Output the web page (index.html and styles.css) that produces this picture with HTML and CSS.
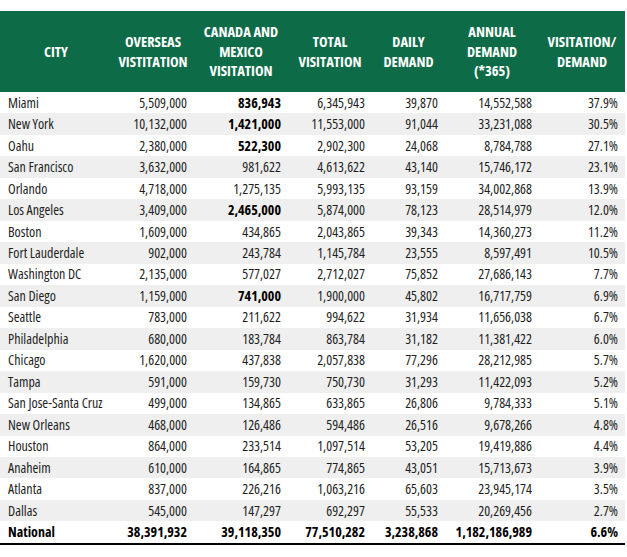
FILE: index.html
```html
<!DOCTYPE html>
<html>
<head>
<meta charset="utf-8">
<link rel="stylesheet" href="styles.css">
</head>
<body>
<table class="data">
  <colgroup>
    <col class="c-city"><col class="c-over"><col class="c-can"><col class="c-tot"><col class="c-daily"><col class="c-ann"><col class="c-vis">
  </colgroup>
  <thead>
    <tr>
      <th>CITY</th>
      <th>OVERSEAS<br>VISTITATION</th>
      <th>CANADA AND<br>MEXICO<br>VISITATION</th>
      <th>TOTAL<br>VISITATION</th>
      <th>DAILY<br>DEMAND</th>
      <th>ANNUAL<br>DEMAND<br>(*365)</th>
      <th>VISITATION/<br>DEMAND</th>
    </tr>
  </thead>
  <tbody>
    <tr><td>Miami</td><td>5,509,000</td><td class="b">836,943</td><td>6,345,943</td><td>39,870</td><td>14,552,588</td><td>37.9%</td></tr>
    <tr><td>New York</td><td>10,132,000</td><td class="b">1,421,000</td><td>11,553,000</td><td>91,044</td><td>33,231,088</td><td>30.5%</td></tr>
    <tr><td>Oahu</td><td>2,380,000</td><td class="b">522,300</td><td>2,902,300</td><td>24,068</td><td>8,784,788</td><td>27.1%</td></tr>
    <tr><td>San Francisco</td><td>3,632,000</td><td>981,622</td><td>4,613,622</td><td>43,140</td><td>15,746,172</td><td>23.1%</td></tr>
    <tr><td>Orlando</td><td>4,718,000</td><td>1,275,135</td><td>5,993,135</td><td>93,159</td><td>34,002,868</td><td>13.9%</td></tr>
    <tr><td>Los Angeles</td><td>3,409,000</td><td class="b">2,465,000</td><td>5,874,000</td><td>78,123</td><td>28,514,979</td><td>12.0%</td></tr>
    <tr><td>Boston</td><td>1,609,000</td><td>434,865</td><td>2,043,865</td><td>39,343</td><td>14,360,273</td><td>11.2%</td></tr>
    <tr><td>Fort Lauderdale</td><td>902,000</td><td>243,784</td><td>1,145,784</td><td>23,555</td><td>8,597,491</td><td>10.5%</td></tr>
    <tr><td>Washington DC</td><td>2,135,000</td><td>577,027</td><td>2,712,027</td><td>75,852</td><td>27,686,143</td><td>7.7%</td></tr>
    <tr><td>San Diego</td><td>1,159,000</td><td class="b">741,000</td><td>1,900,000</td><td>45,802</td><td>16,717,759</td><td>6.9%</td></tr>
    <tr><td>Seattle</td><td>783,000</td><td>211,622</td><td>994,622</td><td>31,934</td><td>11,656,038</td><td>6.7%</td></tr>
    <tr><td>Philadelphia</td><td>680,000</td><td>183,784</td><td>863,784</td><td>31,182</td><td>11,381,422</td><td>6.0%</td></tr>
    <tr><td>Chicago</td><td>1,620,000</td><td>437,838</td><td>2,057,838</td><td>77,296</td><td>28,212,985</td><td>5.7%</td></tr>
    <tr><td>Tampa</td><td>591,000</td><td>159,730</td><td>750,730</td><td>31,293</td><td>11,422,093</td><td>5.2%</td></tr>
    <tr><td>San Jose-Santa Cruz</td><td>499,000</td><td>134,865</td><td>633,865</td><td>26,806</td><td>9,784,333</td><td>5.1%</td></tr>
    <tr><td>New Orleans</td><td>468,000</td><td>126,486</td><td>594,486</td><td>26,516</td><td>9,678,266</td><td>4.8%</td></tr>
    <tr><td>Houston</td><td>864,000</td><td>233,514</td><td>1,097,514</td><td>53,205</td><td>19,419,886</td><td>4.4%</td></tr>
    <tr><td>Anaheim</td><td>610,000</td><td>164,865</td><td>774,865</td><td>43,051</td><td>15,713,673</td><td>3.9%</td></tr>
    <tr><td>Atlanta</td><td>837,000</td><td>226,216</td><td>1,063,216</td><td>65,603</td><td>23,945,174</td><td>3.5%</td></tr>
    <tr><td>Dallas</td><td>545,000</td><td>147,297</td><td>692,297</td><td>55,533</td><td>20,269,456</td><td>2.7%</td></tr>
    <tr class="total"><td>National</td><td>38,391,932</td><td class="b">39,118,350</td><td>77,510,282</td><td>3,238,868</td><td>1,182,186,989</td><td>6.6%</td></tr>
  </tbody>
</table>
</body>
</html>
```

FILE: styles.css
```css
html, body {
  margin: 0;
  padding: 0;
  background: #ffffff;
}
body {
  padding-top: 11px;
  font-family: "Open Sans", "DejaVu Sans Condensed", sans-serif;
  font-stretch: 75%;
  color: #1e1e1e;
}
.data {
  border-collapse: collapse;
  table-layout: fixed;
  width: 625px;
}
.c-city { width: 112px; }
.c-over { width: 82px; }
.c-can { width: 94px; }
.c-tot { width: 84px; }
.c-daily { width: 73px; }
.c-ann { width: 94px; }
.c-vis { width: 86px; }
.data thead tr {
  height: 81px;
  background: #0e6b48;
}
.data th {
  color: #ffffff;
  font-weight: 700;
  font-size: 14.5px;
  line-height: 19.5px;
  text-align: center;
  vertical-align: middle;
  padding: 0;
  white-space: nowrap;
}
.data td {
  height: 21.48px;
  padding: 0 7px 0 0;
  font-size: 14px;
  line-height: 16px;
  text-align: right;
  white-space: nowrap;
  vertical-align: middle;
}
.data td:first-child {
  text-align: left;
  padding: 0 0 0 8px;
}
.data tbody tr:nth-child(even) {
  background: #efefef;
}
.data td.b,
.data tr.total td {
  font-weight: 700;
  color: #000;
}
.data tr.total {
  border-bottom: 2px solid #000;
}
```
